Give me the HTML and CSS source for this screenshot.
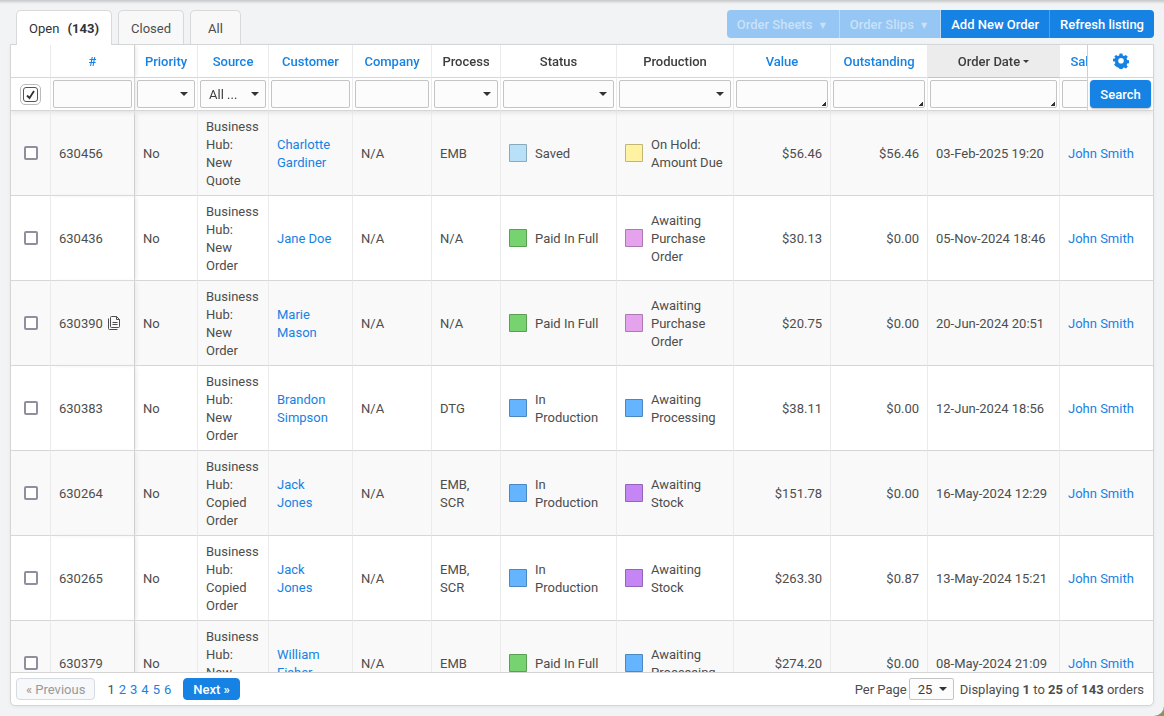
FILE: index.html
```html
<!DOCTYPE html>
<html lang="en">
<head>
<meta charset="utf-8">
<title>Orders</title>
<link rel="stylesheet" href="styles.css">
</head>
<body>
<div class="page">
  <header class="topbar">
    <nav class="tabs">
      <button class="tab tab-active" type="button">Open <b>(143)</b></button>
      <button class="tab" type="button">Closed</button>
      <button class="tab tab-all" type="button">All</button>
    </nav>
    <div class="actions">
      <button type="button" disabled>Order Sheets <span class="tri">▼</span></button>
      <button type="button" disabled>Order Slips <span class="tri">▼</span></button>
      <button type="button">Add New Order</button>
      <button type="button">Refresh listing</button>
    </div>
  </header>

  <main class="card">
    <div class="grid">
      <div class="scroller">
        <table class="orders">
          <colgroup>
            <col class="c-check"><col class="c-id"><col class="c-priority"><col class="c-source"><col class="c-customer"><col class="c-company"><col class="c-process"><col class="c-status"><col class="c-production"><col class="c-money"><col class="c-money"><col class="c-date"><col class="c-sales">
          </colgroup>
          <thead>
            <tr class="heads">
              <th></th>
              <th class="edge"><a href="#">#</a></th>
              <th><a href="#">Priority</a></th>
              <th><a href="#">Source</a></th>
              <th><a href="#">Customer</a></th>
              <th><a href="#">Company</a></th>
              <th>Process</th>
              <th>Status</th>
              <th>Production</th>
              <th><a href="#">Value</a></th>
              <th><a href="#">Outstanding</a></th>
              <th class="sorted">Order Date<span class="caret"></span></th>
              <th><a href="#">Salesperson</a></th>
            </tr>
            <tr class="filters">
              <td class="all-cell"><label class="check-all"><input type="checkbox" checked aria-label="Select all orders"></label></td>
              <td class="edge"><input type="text" aria-label="Order number"></td>
              <td><select aria-label="Priority"><option></option></select></td>
              <td><select aria-label="Source"><option>All ...</option></select></td>
              <td><input type="text" aria-label="Customer"></td>
              <td><input type="text" aria-label="Company"></td>
              <td><select aria-label="Process"><option></option></select></td>
              <td><select aria-label="Status"><option></option></select></td>
              <td><select aria-label="Production"><option></option></select></td>
              <td><input class="range" type="text" aria-label="Value"></td>
              <td><input class="range" type="text" aria-label="Outstanding"></td>
              <td><input class="range" type="text" aria-label="Order date"></td>
              <td><input type="text" aria-label="Salesperson"></td>
            </tr>
          </thead>
          <tbody>
            <tr>
              <td class="pick"><input type="checkbox" aria-label="Select order 630456"></td>
              <td class="edge">630456</td><td>No</td><td>Business Hub: New Quote</td>
              <td><a href="#">Charlotte Gardiner</a></td><td>N/A</td><td>EMB</td>
              <td><div class="state"><i class="chip saved"></i><span>Saved</span></div></td>
              <td><div class="state"><i class="chip hold"></i><span>On Hold: Amount Due</span></div></td>
              <td class="num">$56.46</td><td class="num">$56.46</td><td class="date">03-Feb-2025 19:20</td><td><a href="#">John Smith</a></td>
            </tr>
            <tr>
              <td class="pick"><input type="checkbox" aria-label="Select order 630436"></td>
              <td class="edge">630436</td><td>No</td><td>Business Hub: New Order</td>
              <td><a href="#">Jane Doe</a></td><td>N/A</td><td>N/A</td>
              <td><div class="state"><i class="chip paid"></i><span>Paid In Full</span></div></td>
              <td><div class="state"><i class="chip purchase"></i><span>Awaiting Purchase Order</span></div></td>
              <td class="num">$30.13</td><td class="num">$0.00</td><td class="date">05-Nov-2024 18:46</td><td><a href="#">John Smith</a></td>
            </tr>
            <tr>
              <td class="pick"><input type="checkbox" aria-label="Select order 630390"></td>
              <td class="edge"><div class="with-note">630390<svg class="note" viewBox="0 0 12 14" width="12" height="14" role="img" aria-label="Notes"><path d="M3.500.5h5l3 3v7a1 1 0 0 1-1 1h-7a1 1 0 0 1-1-1v-9a1 1 0 0 1 1-1zM8.500.5v3h3M.5 2.500v10a1 1 0 0 0 1 1h8M4.500 6.500h5M4.500 8.500h5"/></svg></div></td>
              <td>No</td><td>Business Hub: New Order</td>
              <td><a href="#">Marie Mason</a></td><td>N/A</td><td>N/A</td>
              <td><div class="state"><i class="chip paid"></i><span>Paid In Full</span></div></td>
              <td><div class="state"><i class="chip purchase"></i><span>Awaiting Purchase Order</span></div></td>
              <td class="num">$20.75</td><td class="num">$0.00</td><td class="date">20-Jun-2024 20:51</td><td><a href="#">John Smith</a></td>
            </tr>
            <tr>
              <td class="pick"><input type="checkbox" aria-label="Select order 630383"></td>
              <td class="edge">630383</td><td>No</td><td>Business Hub: New Order</td>
              <td><a href="#">Brandon Simpson</a></td><td>N/A</td><td>DTG</td>
              <td><div class="state"><i class="chip working"></i><span>In Production</span></div></td>
              <td><div class="state"><i class="chip working"></i><span>Awaiting Processing</span></div></td>
              <td class="num">$38.11</td><td class="num">$0.00</td><td class="date">12-Jun-2024 18:56</td><td><a href="#">John Smith</a></td>
            </tr>
            <tr>
              <td class="pick"><input type="checkbox" aria-label="Select order 630264"></td>
              <td class="edge">630264</td><td>No</td><td>Business Hub: Copied Order</td>
              <td><a href="#">Jack<br>Jones</a></td><td>N/A</td><td>EMB, SCR</td>
              <td><div class="state"><i class="chip working"></i><span>In Production</span></div></td>
              <td><div class="state"><i class="chip stock"></i><span>Awaiting Stock</span></div></td>
              <td class="num">$151.78</td><td class="num">$0.00</td><td class="date">16-May-2024 12:29</td><td><a href="#">John Smith</a></td>
            </tr>
            <tr>
              <td class="pick"><input type="checkbox" aria-label="Select order 630265"></td>
              <td class="edge">630265</td><td>No</td><td>Business Hub: Copied Order</td>
              <td><a href="#">Jack<br>Jones</a></td><td>N/A</td><td>EMB, SCR</td>
              <td><div class="state"><i class="chip working"></i><span>In Production</span></div></td>
              <td><div class="state"><i class="chip stock"></i><span>Awaiting Stock</span></div></td>
              <td class="num">$263.30</td><td class="num">$0.87</td><td class="date">13-May-2024 15:21</td><td><a href="#">John Smith</a></td>
            </tr>
            <tr>
              <td class="pick"><input type="checkbox" aria-label="Select order 630379"></td>
              <td class="edge">630379</td><td>No</td><td>Business Hub: New Order</td>
              <td><a href="#">William Fisher</a></td><td>N/A</td><td>EMB</td>
              <td><div class="state"><i class="chip paid"></i><span>Paid In Full</span></div></td>
              <td><div class="state"><i class="chip working"></i><span>Awaiting Processing</span></div></td>
              <td class="num">$274.20</td><td class="num">$0.00</td><td class="date">08-May-2024 21:09</td><td><a href="#">John Smith</a></td>
            </tr>
          </tbody>
        </table>
      </div>
      <div class="pinned">
        <button class="gear" type="button" aria-label="Table settings">
          <svg viewBox="0 0 16 16" width="16" height="16"><path fill-rule="evenodd" d="M6.600.5h2.800l.4 2 1.300.6 1.800-1.200 1.900 1.900-1.200 1.800.6 1.400 2 .4v2.800l-2 .4-.6 1.300 1.200 1.800-1.900 1.900-1.800-1.200-1.300.6-.4 2H6.600l-.4-2-1.400-.6L3 13.600l-1.900-1.900 1.200-1.800-.5-1.300-1.800-.4V5.800L1.800 5.400l.5-1.400L1.100 3.800 3 1.900l1.800 1.200 1.400-.6zM8 5a2.800 2.800 0 1 0 0 5.600A2.800 2.800 0 0 0 8 5z"/></svg>
        </button>
        <div class="search-cell"><button class="search" type="button">Search</button></div>
      </div>
    </div>

    <footer class="pager">
      <div class="pages">
        <button class="prev" type="button" disabled>« Previous</button>
        <span class="numbers"><span>1</span><a href="#">2</a><a href="#">3</a><a href="#">4</a><a href="#">5</a><a href="#">6</a></span>
        <button class="next" type="button">Next »</button>
      </div>
      <div class="summary">
        <label for="per-page">Per Page</label>
        <select id="per-page"><option>25</option></select>
        <span class="shown">Displaying <b>1</b> to <b>25</b> of <b>143</b> orders</span>
      </div>
    </footer>
  </main>
</div>
</body>
</html>
```
FILE: styles.css
```css
* { box-sizing: border-box; }
html { background: #8a9657; }
body {
  margin: 0;
  font: 13px/18px Roboto, "Liberation Sans", sans-serif;
  color: #4d4d4d;
}
button, input, select { font: inherit; color: inherit; margin: 0; }
button { cursor: pointer; }
a { color: #1682e4; text-decoration: none; }

.page {
  height: 100vh;
  display: flex;
  flex-direction: column;
  padding: 10px;
  background: linear-gradient(#c6c7c9, #f2f3f5) no-repeat top / 100% 4px #f2f3f5;
  clip-path: inset(0 round 0 0 10px 0);
}

.topbar { display: flex; justify-content: space-between; align-items: flex-start; height: 34px; }
.tabs { display: flex; gap: 6px; padding-left: 6px; height: 35px; position: relative; z-index: 3; }
.tab {
  padding: 2px 12px 0;
  height: 34px;
  border: 1px solid #d9d9d9;
  border-bottom: 0;
  border-radius: 5px 5px 0 0;
  background: #f8f8f8;
}
.tab b { margin-left: 5px; }
.tab-active { height: 35px; background: #fff; color: #333; }
.tab-all { padding: 2px 17px 0; }

.actions { display: flex; }
.actions button {
  height: 28px;
  padding: 2px 10px 0;
  border: 0;
  border-right: 1px solid #4da0ea;
  background: #1682e4;
  color: #fff;
  font-weight: 500;
}
.actions button:first-child { border-radius: 4px 0 0 4px; }
.actions button:last-child { border-right: 0; border-radius: 0 4px 4px 0; }
.actions button:disabled { background: #96c6f3; color: #c9e1f8; border-right-color: #b9d9f6; }
.tri { font: 8px "DejaVu Sans", sans-serif; margin: 0 3px 0 4px; vertical-align: 1px; }

.card {
  flex: 1;
  min-height: 0;
  display: flex;
  flex-direction: column;
  border: 1px solid #d4d5d6;
  border-radius: 0 0 5px 5px;
  background: #fff;
  box-shadow: 0 1px 3px #e4e5e7;
}
.grid { position: relative; flex: 1; min-height: 0; display: flex; }
.scroller { flex: 1; overflow: auto; scrollbar-width: none; }

.orders { width: 100%; table-layout: fixed; border-collapse: separate; border-spacing: 0; }
.c-check { width: 40px; }
.c-id, .c-customer { width: 84px; }
.c-priority { width: 63px; }
.c-source { width: 71px; }
.c-company { width: 79px; }
.c-process { width: 69px; }
.c-status { width: 116px; }
.c-production { width: 117px; }
.c-money { width: 97px; }
.c-date { width: 132px; }
.c-sales { width: 93px; }

.orders th, .orders td { border-right: 1px solid #ebebeb; border-bottom: 1px solid #d6d6d6; }
.orders tr > :last-child { border-right: 0; }
.orders .edge { border-right-color: #cfcfcf; box-shadow: 2px 0 4px -1px #e6e6e6; }
.orders thead { position: sticky; top: 0; z-index: 2; background: #fff; box-shadow: 0 2px 4px #e4e4e4; }
.heads th { height: 33px; padding: 2px 0 0; font-weight: 500; color: #3d3d3d; white-space: nowrap; }
.heads .sorted { background: #ececec; border-bottom-color: #c4c4c4; }
.caret {
  display: inline-block;
  margin-left: 3px;
  vertical-align: 3px;
  border: 3px solid transparent;
  border-top-color: #3d3d3d;
  border-bottom: 0;
}
.filters td { height: 33px; padding: 2px; }
.filters input, .filters select {
  display: block;
  width: 100%;
  height: 28px;
  border: 1px solid #c4c4c4;
  border-radius: 2px;
  background: #fcfcfc;
}
select { appearance: none; color: #3d3d3d; }
.filters select, .summary select {
  padding: 1px 20px 0 8px;
  background: url("data:image/svg+xml,%3Csvg xmlns='http://www.w3.org/2000/svg' width='8' height='4'%3E%3Cpath d='M0 0h8L4 4z' fill='%23333'/%3E%3C/svg%3E") no-repeat right 6px center / 8px 4px #fcfcfc;
}
.filters .range { background: linear-gradient(135deg, transparent 50%, #333 50%) no-repeat right 1px bottom 1px / 4px 4px #fcfcfc; }

input[type="checkbox"] {
  appearance: none;
  display: block;
  width: 14px;
  height: 14px;
  border: 2px solid #8f8f9d;
  border-radius: 2px;
  background: #fff;
}
.filters .all-cell { padding: 0 0 0 9px; }
.check-all {
  display: grid;
  place-items: center;
  width: 21px;
  height: 21px;
  border: 1px solid #bbb;
  border-radius: 5px;
}
.check-all input[type="checkbox"] {
  width: 15px;
  height: 15px;
  border: 1px solid #555;
  border-radius: 3px;
  background: url("data:image/svg+xml,%3Csvg xmlns='http://www.w3.org/2000/svg' viewBox='0 0 13 13'%3E%3Cpath d='M3 7.500l2.500 2.500L10 3' fill='none' stroke='%23333' stroke-width='1.800'/%3E%3C/svg%3E");
}

.orders tbody td { padding: 7px 8px 5px; vertical-align: middle; }
.orders tbody tr:nth-child(odd) { background: #f9f9f9; }
.orders tbody .pick { padding: 0 13px; }
.orders tbody .num { text-align: right; }
.orders tbody .date { white-space: nowrap; }
.state { display: flex; align-items: center; gap: 8px; }
.chip { flex: none; width: 18px; height: 18px; margin-bottom: 2px; border: 1px solid #0000003f; border-radius: 1px; }
.saved { background-color: #b8e1f9; }
.hold { background-color: #fff2a0; }
.paid { background-color: #77d36f; }
.purchase { background-color: #e5a3ee; }
.working { background-color: #64b4ff; }
.stock { background-color: #c585f5; }
.with-note { display: flex; align-items: center; gap: 5px; }
.note { fill: none; stroke: #4d4d4d; margin-bottom: 2px; }

.pinned {
  position: absolute;
  top: 0;
  right: 0;
  z-index: 3;
  width: 66px;
  border-left: 1px solid #d0d0d0;
  background: #fff;
}
.gear {
  display: grid;
  place-items: center;
  width: 100%;
  height: 33px;
  padding: 0;
  border: 0;
  border-bottom: 1px solid #d6d6d6;
  background: none;
}
.gear svg { fill: #1682e4; }
.search-cell { height: 33px; padding: 2px; border-bottom: 1px solid #d6d6d6; }
.search {
  display: block;
  width: 100%;
  height: 28px;
  padding: 2px 0 0;
  border: 0;
  border-radius: 4px;
  background: #1682e4;
  color: #fff;
  font-weight: 500;
  box-shadow: 0 1px 2px #bbb;
}

.pager {
  display: flex;
  justify-content: space-between;
  align-items: center;
  height: 33px;
  padding: 0 9px 0 5px;
  border-top: 1px solid #d4d4d4;
}
.pages, .summary, .numbers { display: flex; align-items: center; }
.pages { gap: 12px; }
.numbers { gap: 4px; }
.numbers, .summary label, .shown { padding-top: 2px; }
.prev, .next { height: 22px; padding: 1px 9px 0; border: 1px solid #d5dbe1; border-radius: 4px; background: #f7f8f9; color: #999; }
.next { border-color: #1682e4; background: #1682e4; color: #fff; font-weight: 500; }
.summary select { height: 22px; margin: 0 6px 0 2px; border: 1px solid #c4c4c4; border-radius: 2px; }
```
